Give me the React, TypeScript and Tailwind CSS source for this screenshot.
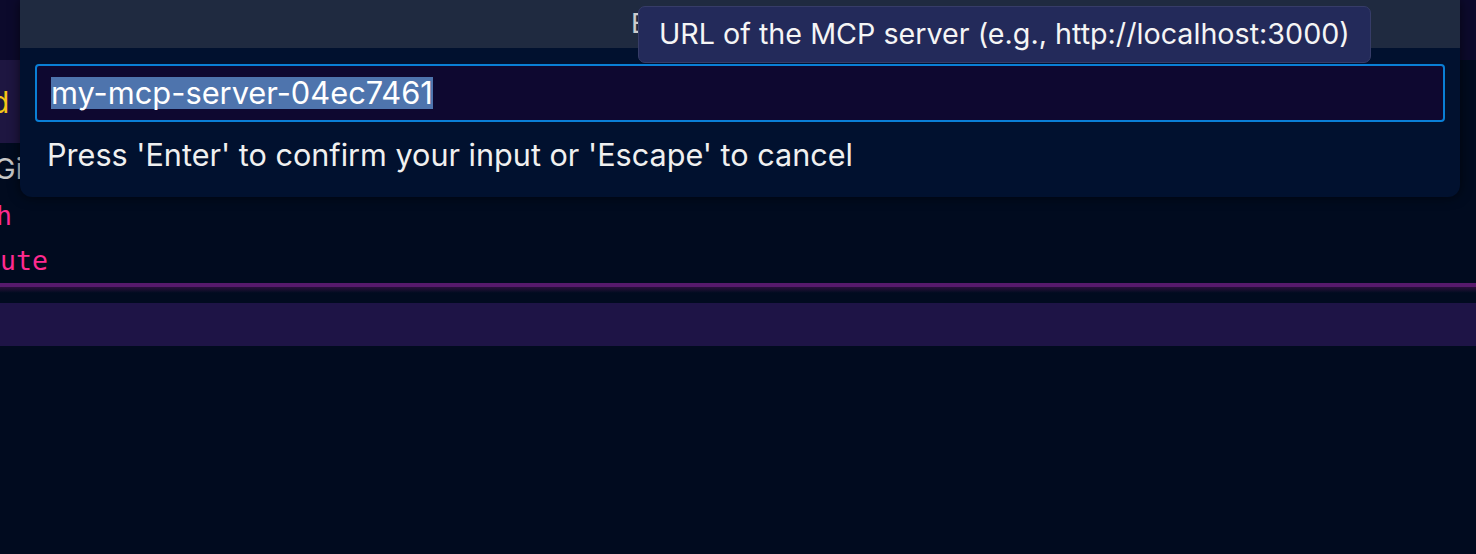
import React from "react";

export default function App() {
  const sans = { fontFamily: "Inter, 'Noto Sans', sans-serif" };
  const mono = { fontFamily: "'DejaVu Sans Mono', monospace" };
  return (
    <div className="relative w-[1476px] h-[554px] overflow-hidden bg-[#010b1f]" style={sans}>
      {/* background workbench */}
      <div className="flex flex-col w-full">
        <div className="h-[60px] bg-[#0c0a2c]" />
        <div className="h-[83px] w-[700px] bg-[#1e1641] flex items-center">
          <span className="text-[30px] leading-none text-[#f5c518] ml-[-9px]">d</span>
        </div>
        <div className="h-[50px] flex items-center">
          <span className="text-[29px] leading-none text-[#c8c8c8] ml-[-6px]">Gi</span>
        </div>
        <div className="h-[46px] flex items-center">
          <span className="text-[26.5px] leading-none text-[#ff2a8f] ml-[-4px]" style={mono}>h</span>
        </div>
        <div className="h-[44px] flex items-center">
          <span className="text-[26.5px] leading-none text-[#ff2a8f]" style={mono}>ute</span>
        </div>
        <div className="h-[4px] bg-[#571a6c]" />
        <div className="h-[6px] bg-gradient-to-b from-[#2a0f3c] to-[#010b1f]" />
        <div className="h-[10px]" />
        <div className="h-[43px] bg-[#1e1446]" />
      </div>

      {/* quick input dialog */}
      <div className="absolute left-[20px] top-0 w-[1440px] h-[197px] rounded-b-[12px] bg-[#01112f] shadow-[0_0_12px_rgba(0,0,0,0.6)] flex flex-col">
        <div className="h-[48px] bg-[#1f2a40] relative">
          <span className="absolute left-[611px] top-[4px] text-[27px] text-[#cccccc]">E</span>
        </div>
        <div className="px-[15px] pt-[16px]">
          <div className="h-[58px] rounded-[4px] border-2 border-[#0a7fd6] bg-[#0e0830] flex items-center px-[14px]">
            <span className="text-[30.8px] leading-[32px] text-white bg-[#4e74ad]">my-mcp-server-04ec7461</span>
          </div>
          <div className="pl-[12px] pt-[16px] text-[30.6px] leading-[34px] text-[#f0f0f0]">
            Press 'Enter' to confirm your input or 'Escape' to cancel
          </div>
        </div>
      </div>

      {/* tooltip */}
      <div className="absolute left-[638px] top-[6px] h-[57px] px-[20px] flex items-center rounded-[7px] bg-[#232a5a] border border-[#363c68]">
        <span className="text-[28.7px] leading-none text-[#f5f5f5] whitespace-nowrap">URL of the MCP server (e.g., http://localhost:3000)</span>
      </div>
    </div>
  );
}
